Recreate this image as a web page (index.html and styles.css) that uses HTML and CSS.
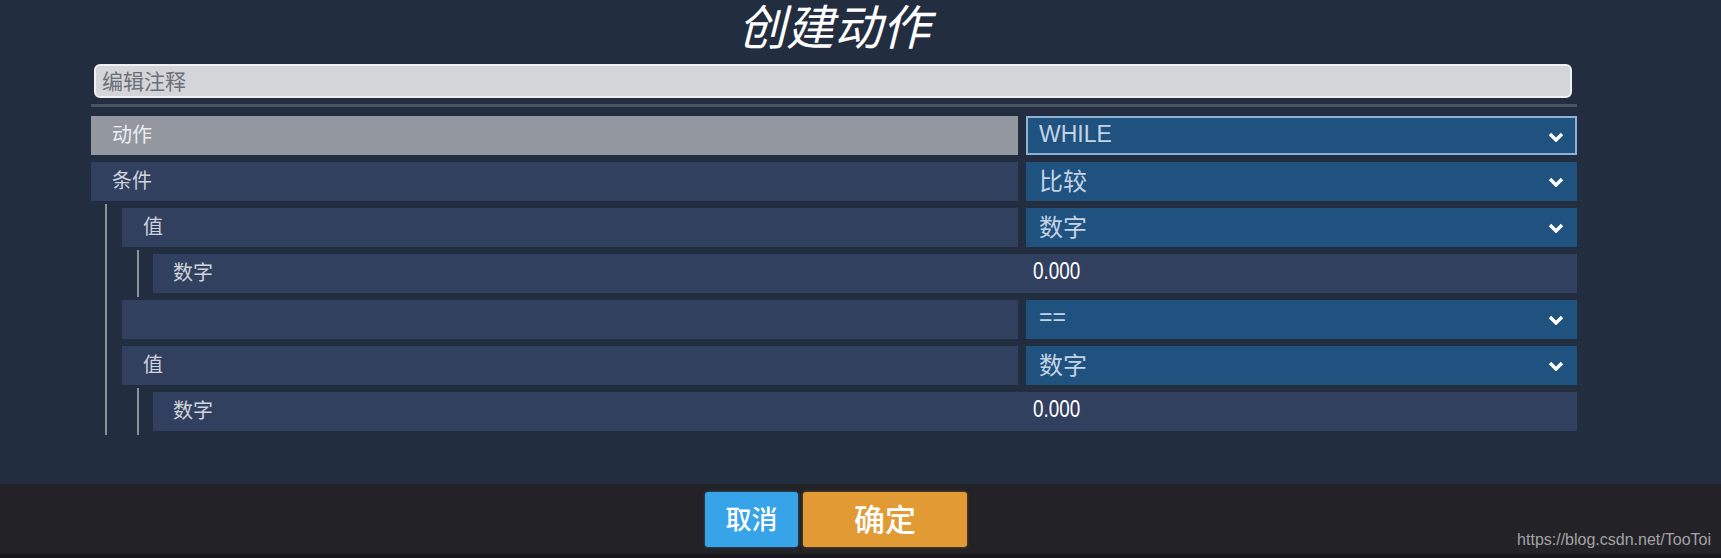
FILE: index.html
```html
<!DOCTYPE html>
<html lang="zh-CN">
<head>
<meta charset="utf-8">
<title>创建动作</title>
<link rel="stylesheet" href="styles.css">
</head>
<body>
<div class="screen">
  <main class="main">
    <div class="panel">
      <h1 class="title">创建动作</h1>
      <div class="comment">编辑注释</div>
      <div class="sep"></div>
      <div class="tree">
        <div class="row">
          <div class="label active">动作</div>
          <div class="select focused"><span class="latin">WHILE</span><svg class="chev" viewBox="0 0 16 10"><path d="M2 2 L8 8 L14 2"/></svg></div>
        </div>
        <div class="row">
          <div class="label">条件</div>
          <div class="select"><span>比较</span><svg class="chev" viewBox="0 0 16 10"><path d="M2 2 L8 8 L14 2"/></svg></div>
        </div>
        <div class="children">
          <div class="row">
            <div class="label">值</div>
            <div class="select"><span>数字</span><svg class="chev" viewBox="0 0 16 10"><path d="M2 2 L8 8 L14 2"/></svg></div>
          </div>
          <div class="children deep">
            <div class="row field">
              <div class="label plain">数字</div>
              <div class="value"><span class="num">0.000</span></div>
            </div>
          </div>
          <div class="row">
            <div class="label"></div>
            <div class="select"><span class="latin">==</span><svg class="chev" viewBox="0 0 16 10"><path d="M2 2 L8 8 L14 2"/></svg></div>
          </div>
          <div class="row">
            <div class="label">值</div>
            <div class="select"><span>数字</span><svg class="chev" viewBox="0 0 16 10"><path d="M2 2 L8 8 L14 2"/></svg></div>
          </div>
          <div class="children deep">
            <div class="row field">
              <div class="label plain">数字</div>
              <div class="value"><span class="num">0.000</span></div>
            </div>
          </div>
        </div>
      </div>
    </div>
  </main>
  <footer class="footer">
    <div class="buttons">
      <button class="btn cancel">取消</button>
      <button class="btn confirm">确定</button>
    </div>
  </footer>
  <div class="watermark">https://blog.csdn.net/TooToi</div>
</div>
</body>
</html>
```

FILE: styles.css
```css
* { box-sizing: border-box; }
html, body { margin: 0; padding: 0; }
body {
  width: 1721px;
  height: 558px;
  overflow: hidden;
  font-family: "Noto Sans CJK SC", "Noto Sans", sans-serif;
  background: #232d40;
}
.screen {
  position: relative;
  display: flex;
  flex-direction: column;
  height: 558px;
}
.main {
  height: 484px;
  background: #232d40;
}
.panel {
  margin-left: 91px;
  width: 1486px;
}
.title {
  margin: 0;
  height: 48px;
  line-height: 48px;
  font-size: 48px;
  font-weight: 400;
  font-style: italic;
  color: #ffffff;
  text-align: center;
}
.comment {
  margin: 16px 5px 0 3px;
  height: 34px;
  border: 2px solid #eef0f2;
  border-radius: 6px;
  background: #d4d5d9;
  color: #6b6f78;
  font-size: 21px;
  line-height: 28px;
  padding-left: 6px;
}
.sep {
  margin-top: 6px;
  height: 3px;
  background: #4a5366;
}
.tree {
  margin-top: 9px;
  display: flex;
  flex-direction: column;
  gap: 7px;
}
.children {
  display: flex;
  flex-direction: column;
  gap: 7px;
  margin: -4px 0 -4px 14px;
  padding: 4px 0 4px 15px;
  border-left: 2px solid #8b909a;
}
.children.deep {
  margin-left: 15px;
  padding-left: 14px;
}
.row {
  display: flex;
  gap: 8px;
  height: 39px;
}
.label {
  flex: 1;
  display: flex;
  align-items: center;
  padding: 0 0 5px 21px;
  background: #324060;
  color: #cfd3db;
  font-size: 20px;
}
.label.active {
  background: #93979f;
  color: #eceef1;
}
.row.field {
  background: #324060;
}
.label.plain {
  background: transparent;
  padding-left: 20px;
}
.select {
  width: 551px;
  display: flex;
  align-items: center;
  justify-content: space-between;
  padding: 0 13px 5px 13px;
  background: #1f527e;
  color: #c3d4e6;
  font-size: 24px;
}
.select.focused {
  border: 2px solid #8db2d6;
  padding: 0 11px 3px 11px;
}
.latin {
  font-family: "Liberation Sans", Arial, sans-serif;
  font-size: 23px;
}
.chev {
  width: 16px;
  height: 10px;
  margin-top: 5px;
  fill: none;
  stroke: #ffffff;
  stroke-width: 3.4;
  stroke-linecap: butt;
  stroke-linejoin: miter;
}
.value {
  width: 551px;
  display: flex;
  align-items: center;
  padding: 0 0 5px 7px;
}
.num {
  display: inline-block;
  font-family: "Liberation Sans", Arial, sans-serif;
  font-size: 23px;
  color: #ffffff;
  transform: scaleX(0.82);
  transform-origin: left center;
}
.footer {
  height: 74px;
  background: #232226;
  border-bottom: 4px solid #17161a;
}
.buttons {
  margin-left: 95px;
  width: 1482px;
  padding-top: 8px;
  display: flex;
  justify-content: center;
  gap: 5px;
}
.btn {
  height: 55px;
  border: none;
  border-radius: 3px;
  color: #ffffff;
  font-family: "Noto Sans CJK SC", sans-serif;
  font-weight: 500;
  padding: 0 0 4px 0;
  line-height: 1;
}
.cancel {
  width: 93px;
  background: #37a3e8;
  font-size: 26px;
  box-shadow: 0 0 3px rgba(55, 163, 232, 0.5);
}
.confirm {
  width: 164px;
  background: #e19a34;
  font-size: 31px;
  box-shadow: 0 0 3px rgba(225, 154, 52, 0.5);
}
.watermark {
  position: absolute;
  right: 10px;
  bottom: 10px;
  font-family: "Liberation Sans", Arial, sans-serif;
  font-size: 16px;
  line-height: 16px;
  color: #a3a3a5;
}
```
